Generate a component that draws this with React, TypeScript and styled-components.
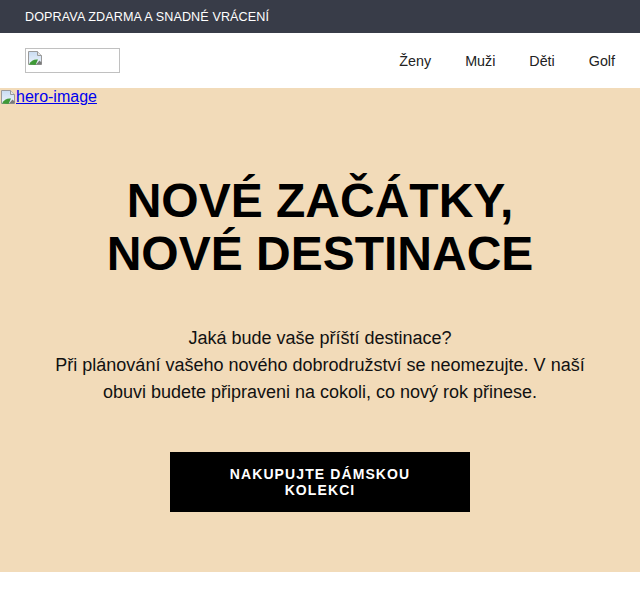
import React from "react";
import styled, { createGlobalStyle } from "styled-components";

const GlobalStyle = createGlobalStyle`
  html, body { margin: 0; padding: 0; background: #fff; }
  body { font-family: "Liberation Sans", Arial, sans-serif; color: #111; }
  * { box-sizing: border-box; }
`;

const Promo = styled.div`
  height: 33px;
  background: #383c48;
  color: #fff;
  display: flex;
  align-items: center;
  padding: 0 25px;
  font-size: 12.6px;
  letter-spacing: 0.1px;
  text-transform: uppercase;
`;

const Header = styled.header`
  height: 55px;
  background: #fff;
  display: flex;
  align-items: center;
  justify-content: space-between;
  padding: 0 25px;
`;

const LogoFrame = styled.div`
  width: 95px;
  height: 25px;
  border: 1px solid #c0c0c0;
  padding: 1px;
  display: flex;
  align-items: flex-start;
`;

const Nav = styled.nav`
  display: flex;
  gap: 34px;
`;

const NavLink = styled.a`
  font-size: 14.3px;
  color: #222;
  text-decoration: none;
`;

const Hero = styled.section`
  background: #f2dbb9;
  padding-bottom: 60px;
`;

const ImageLink = styled.a`
  display: inline-flex;
  align-items: center;
  font-size: 16px;
  line-height: 17px;
  color: #0000ee;
  text-decoration: underline;
`;

const HeroBody = styled.div`
  display: flex;
  flex-direction: column;
  align-items: center;
  text-align: center;
  padding: 0 40px;
`;

const Title = styled.h1`
  margin: 65px 0 0;
  font-size: 48px;
  line-height: 53px;
  font-weight: 700;
  color: #000;
`;

const Lead = styled.p`
  margin: 45px 0 0;
  font-size: 18px;
  line-height: 27px;
  color: #111;
`;

const Cta = styled.a`
  margin-top: 46px;
  width: 300px;
  height: 60px;
  background: #000;
  color: #fff;
  display: flex;
  align-items: center;
  justify-content: center;
  padding: 0 40px;
  font-size: 14px;
  line-height: 16px;
  font-weight: 700;
  letter-spacing: 1.1px;
  text-transform: uppercase;
  text-decoration: none;
`;

const BrokenImage = () => (
  <svg width="16" height="16" viewBox="0 0 16 16" aria-hidden="true">
    <defs>
      <linearGradient id="sky" x1="0" y1="0" x2="0" y2="1">
        <stop offset="0" stopColor="#c9dcf2" />
        <stop offset="1" stopColor="#eef4fb" />
      </linearGradient>
    </defs>
    <path d="M1.5 1.5h9l4 4v9h-13z" fill="url(#sky)" stroke="#9a9a9a" />
    <path d="M10.5 1.5v4h4" fill="#e6e6e6" stroke="#9a9a9a" />
    <path d="M2 14.5c2-4 5-5.5 9-5l-2.5 5.5z" fill="#3f9a37" />
    <path d="M9 14.5l3.5-4 2 2v2z" fill="#7a7a7a" />
  </svg>
);

export default function App() {
  return (
    <>
      <GlobalStyle />
      <Promo>Doprava zdarma a snadné vrácení</Promo>
      <Header>
        <LogoFrame>
          <BrokenImage />
        </LogoFrame>
        <Nav>
          <NavLink href="#">Ženy</NavLink>
          <NavLink href="#">Muži</NavLink>
          <NavLink href="#">Děti</NavLink>
          <NavLink href="#">Golf</NavLink>
        </Nav>
      </Header>
      <Hero>
        <ImageLink href="#">
          <BrokenImage />
          hero-image
        </ImageLink>
        <HeroBody>
          <Title>
            NOVÉ ZAČÁTKY,
            <br />
            NOVÉ DESTINACE
          </Title>
          <Lead>
            Jaká bude vaše příští destinace?
            <br />
            Při plánování vašeho nového dobrodružství se neomezujte. V naší
            obuvi budete připraveni na cokoli, co nový rok přinese.
          </Lead>
          <Cta href="#">Nakupujte dámskou kolekci</Cta>
        </HeroBody>
      </Hero>
    </>
  );
}
